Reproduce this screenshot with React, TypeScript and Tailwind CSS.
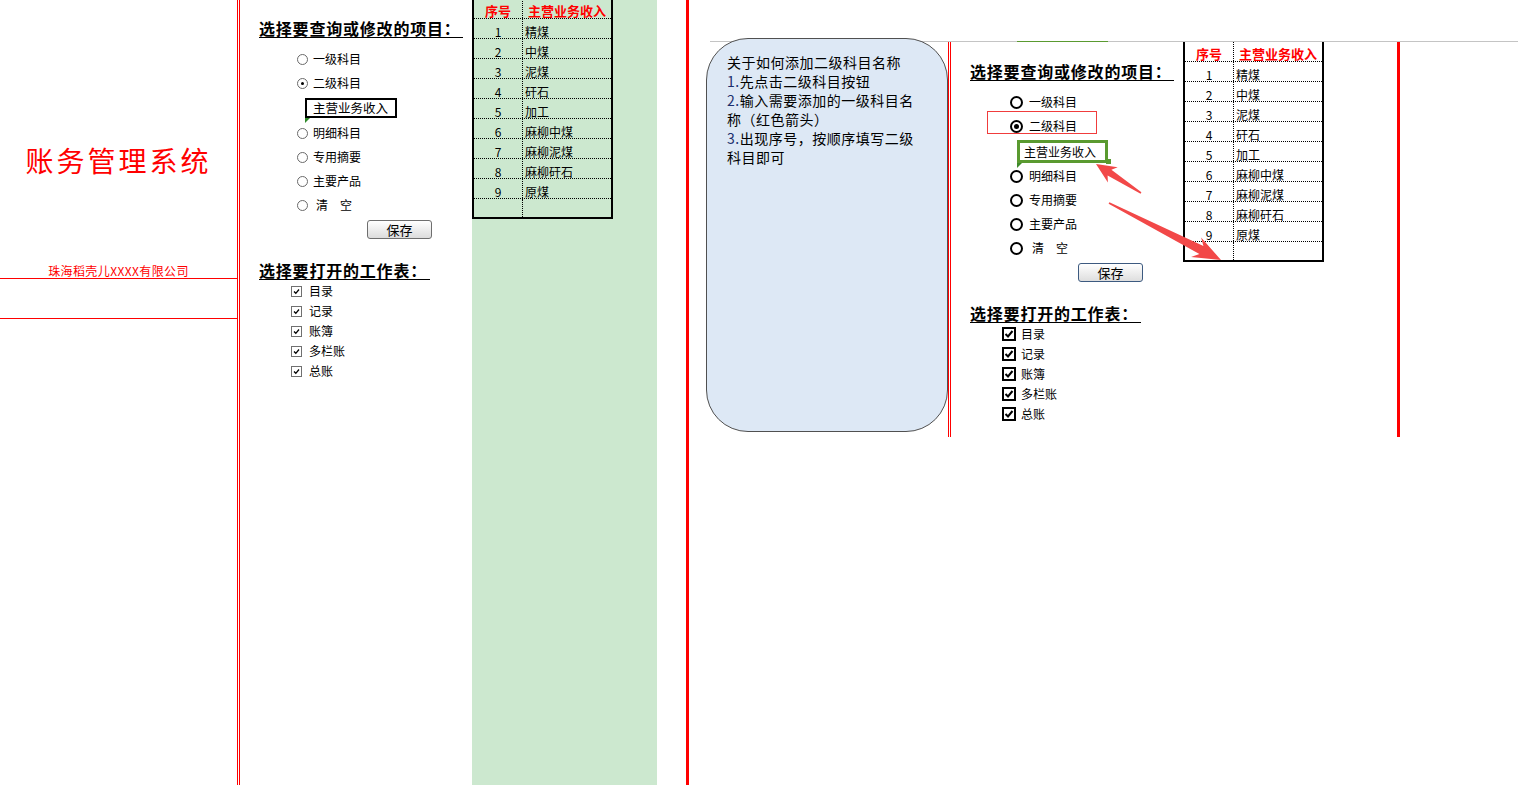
import React from 'react';

const items = ['精煤', '中煤', '泥煤', '矸石', '加工', '麻柳中煤', '麻柳泥煤', '麻柳矸石', '原煤'];

function Radio({ checked, big }: { checked?: boolean; big?: boolean }) {
  if (big) {
    return (
      <span className="w-[13px] h-[13px] rounded-full border-2 border-black bg-white flex items-center justify-center shrink-0">
        {checked && <span className="w-[5px] h-[5px] rounded-full bg-black" />}
      </span>
    );
  }
  return (
    <span className="w-[11px] h-[11px] rounded-full border border-[#6a6a6a] bg-white flex items-center justify-center shrink-0">
      {checked && <span className="w-[3px] h-[3px] rounded-full bg-black" />}
    </span>
  );
}

function Check({ big }: { big?: boolean }) {
  if (big) {
    return (
      <span className="w-[14px] h-[14px] border-2 border-black bg-white flex items-center justify-center shrink-0">
        <svg width="10" height="10" viewBox="0 0 10 10">
          <path d="M1.5 5 L4 7.5 L8.5 2" stroke="#000" strokeWidth="2" fill="none" />
        </svg>
      </span>
    );
  }
  return (
    <span className="w-[11px] h-[11px] border border-[#707070] bg-white flex items-center justify-center shrink-0">
      <svg width="7" height="7" viewBox="0 0 7 7">
        <path d="M1 3.5 L2.8 5.3 L6 1.5" stroke="#000" strokeWidth="1.3" fill="none" />
      </svg>
    </span>
  );
}

function RadioRow({ label, checked, big, extra }: { label: React.ReactNode; checked?: boolean; big?: boolean; extra?: React.ReactNode }) {
  return (
    <div className={big ? 'relative h-[24px] flex items-center pl-[59px] gap-[6px]' : 'relative h-[24px] flex items-center pl-[57px] gap-[5px]'}>
      {extra}
      <Radio checked={checked} big={big} />
      <span className="text-[12px] leading-[14px] whitespace-nowrap">{label}</span>
    </div>
  );
}

function FormPanel({ right }: { right?: boolean }) {
  return (
    <div className={right ? 'relative w-[232px] shrink-0 flex flex-col pt-[1px]' : 'relative w-[232px] shrink-0 flex flex-col'}>
      {right && <div className="absolute top-[-1px] left-[66px] w-[91px] h-[1px] bg-[#5a9a30]" />}
      <div className="mt-[20px] ml-[19px] w-[204px] border-b border-black text-[16px] leading-[17px] font-bold tracking-[0.8px] whitespace-nowrap">
        选择要查询或修改的项目：
      </div>
      <div className="mt-[9px] flex flex-col">
        <RadioRow label="一级科目" big={right} />
        <RadioRow
          label="二级科目"
          checked
          big={right}
          extra={right ? <div className="absolute left-[36px] top-[-3px] w-[110px] h-[23px] border border-[#f03c3c]" /> : null}
        />
        <div className="h-[26px] flex items-start">
          {right ? (
            <div className="relative mt-[2px] ml-[66px] w-[91px] h-[23px] border-[3px] border-[#5a9a30] flex items-center pl-[4px] pt-[1px] text-[12px] leading-[14px] whitespace-nowrap">
              主营业务收入
              <span className="absolute right-[-6px] bottom-[-4px] w-[5px] h-[5px] bg-[#5a9a30]" />
              <svg className="absolute left-[-3px] top-[20px]" width="5" height="5" viewBox="0 0 5 5">
                <polygon points="0,0 5,0 0,5" fill="#3f8a2a" />
              </svg>
            </div>
          ) : (
            <div className="relative mt-[3px] ml-[65px] w-[92px] h-[20px] border-2 border-black flex items-center pl-[6px] text-[12.5px] leading-[14px] whitespace-nowrap">
              主营业务收入
              <svg className="absolute left-[-2px] top-[18px]" width="5" height="5" viewBox="0 0 5 5">
                <polygon points="0,0 5,0 0,5" fill="#2f8a2a" />
              </svg>
            </div>
          )}
        </div>
        <RadioRow label="明细科目" big={right} />
        <RadioRow label="专用摘要" big={right} />
        <RadioRow label="主要产品" big={right} />
        <RadioRow label={<span className="ml-[3px]">清　空</span>} big={right} />
      </div>
      <div
        className={
          right
            ? 'mt-[3px] ml-[127px] w-[65px] h-[19px] rounded-[3px] border border-[#3d5a80] bg-gradient-to-b from-white to-[#dedede] flex items-center justify-center text-[13px] leading-[15px]'
            : 'mt-[3px] ml-[127px] w-[65px] h-[19px] rounded-[3px] border border-[#6e6e6e] bg-gradient-to-b from-white to-[#dcdcdc] flex items-center justify-center text-[13px] leading-[15px]'
        }
      >
        保存
      </div>
      <div className="mt-[23px] ml-[19px] w-[171px] border-b border-black text-[16px] leading-[17px] font-bold tracking-[0.8px] whitespace-nowrap">
        选择要打开的工作表：
      </div>
      <div className="mt-[1px] flex flex-col">
        {['目录', '记录', '账簿', '多栏账', '总账'].map((t) => (
          <div key={t} className={right ? 'h-[20px] flex items-center pl-[51px] gap-[5px]' : 'h-[20px] flex items-center pl-[51px] gap-[7px]'}>
            <Check big={right} />
            <span className="text-[12px] leading-[14px] whitespace-nowrap">{t}</span>
          </div>
        ))}
      </div>
    </div>
  );
}

function DataTable({ left }: { left?: boolean }) {
  return (
    <div className={left ? '-mt-[1px] w-[141px] shrink-0 border-x-2 border-b-2 border-black flex flex-col' : 'w-[141px] shrink-0 border-x-2 border-b-2 border-black flex flex-col bg-white'}>
      <div className="h-[20px] flex border-b border-dotted border-black">
        <div className="w-[49px] border-r border-dotted border-black flex items-end justify-center text-[13px] leading-[14px] font-bold text-[#ff0000]">
          序号
        </div>
        <div className="flex-1 flex items-end justify-center text-[13px] leading-[14px] font-bold text-[#ff0000] whitespace-nowrap">
          主营业务收入
        </div>
      </div>
      {items.map((t, i) => (
        <div key={t} className="h-[20px] flex border-b border-dotted border-black">
          <div className="w-[49px] border-r border-dotted border-black flex items-end justify-center text-[12px] leading-[13px]">
            {i + 1}
          </div>
          <div className="flex-1 flex items-end pl-[2px] text-[12px] leading-[13px] whitespace-nowrap">{t}</div>
        </div>
      ))}
      <div className="h-[18px] flex">
        <div className="w-[49px] border-r border-dotted border-black" />
        <div className="flex-1" />
      </div>
    </div>
  );
}

export default function App() {
  return (
    <div className="relative flex w-[1526px] h-[785px] overflow-hidden bg-white text-black font-['Noto_Sans_CJK_SC',sans-serif]">
      {/* Left title panel */}
      <div className="w-[237px] shrink-0 flex flex-col pt-[144px]">
        <div className="text-center text-[28px] leading-[32px] tracking-[3px] text-[#ff0000] whitespace-nowrap">账务管理系统</div>
        <div className="mt-[88px] text-center text-[12px] leading-[14px] tracking-[0.4px] text-[#ff0000] whitespace-nowrap">珠海稻壳儿XXXX有限公司</div>
        <div className="h-[41px] border-y border-[#ff0000]" />
      </div>
      <div className="w-[3px] shrink-0 border-x border-[#ff0000]" />

      {/* Middle form */}
      <FormPanel />

      {/* Green table column */}
      <div className="w-[185px] shrink-0 bg-[#cce8cf] flex flex-col">
        <DataTable left />
      </div>
      <div className="w-[29px] shrink-0" />
      <div className="w-[3px] shrink-0 bg-[#ff0000]" />

      {/* Right annotated area */}
      <div className="flex-1 pl-[21px] pt-[41px]">
        <div className="w-[808px] border-t border-[#c4c4c4] flex items-start">
          <div className="relative z-10 -mt-[4px] -ml-[4px] w-[242px] h-[394px] shrink-0 rounded-[42px] border border-[#505050] bg-[#dde8f5] pt-[14px] pl-[20px] text-[14px] leading-[19px] tracking-[0.5px] whitespace-nowrap">
            <div>关于如何添加二级科目名称</div>
            <div><span className="text-[#1c2f6e]">1.</span>先点击二级科目按钮</div>
            <div><span className="text-[#1c2f6e]">2.</span>输入需要添加的一级科目名</div>
            <div>称（红色箭头）</div>
            <div><span className="text-[#1c2f6e]">3.</span>出现序号，按顺序填写二级</div>
            <div>科目即可</div>
          </div>
          <div className="w-[3px] h-[395px] shrink-0 border-x border-[#ff0000]" />
          <FormPanel right />
          <DataTable />
          <div className="w-[73px] shrink-0" />
          <div className="w-[3px] h-[395px] shrink-0 bg-[#ff0000]" />
        </div>
      </div>

      {/* Annotation arrows */}
      <svg className="absolute left-0 top-0 pointer-events-none z-20" width="1526" height="785" viewBox="0 0 1526 785">
        <polygon
          points="1096,164 1117.7,167.2 1111.4,169.8 1141.4,192.3 1140.6,193.7 1107.6,175.6 1107.9,182.4"
          fill="#f24848"
        />
        <polygon
          points="1221,260 1201.1,237.5 1203.4,246 1109.4,202.3 1108.6,203.7 1199.4,254 1191.1,257.1"
          fill="#f24848"
        />
      </svg>
    </div>
  );
}
